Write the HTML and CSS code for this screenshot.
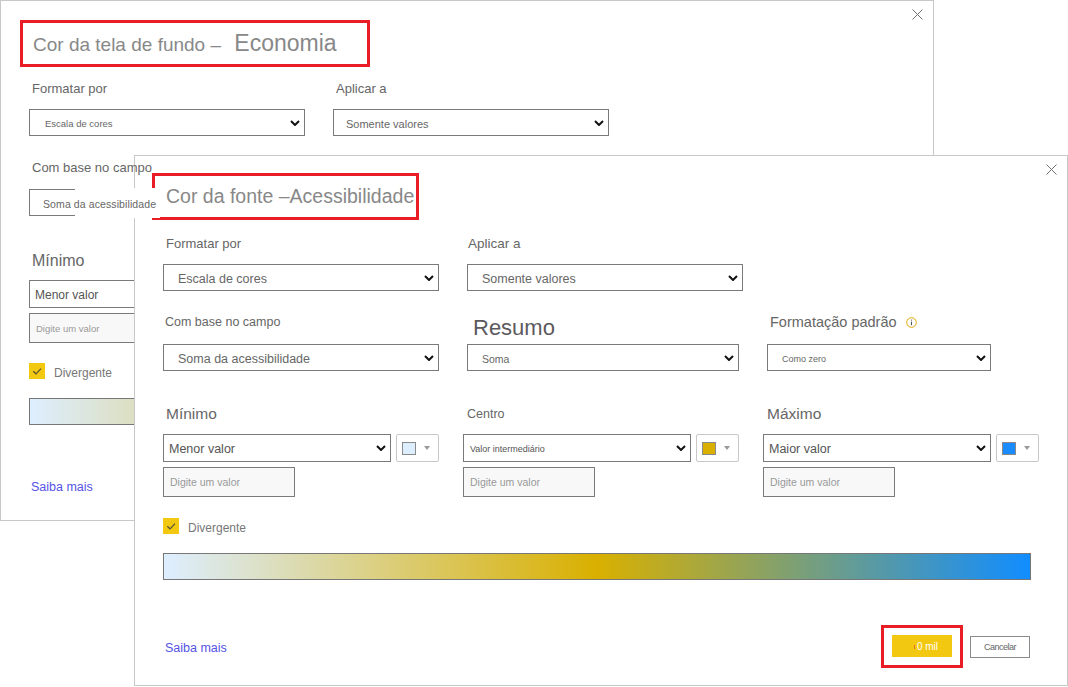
FILE: index.html
```html
<!DOCTYPE html>
<html lang="pt">
<head>
<meta charset="utf-8">
<title>Formatação condicional</title>
<link rel="stylesheet" href="styles.css">
</head>
<body>
<section class="dlg dlg-back">
  <button class="close" aria-label="Fechar"><svg width="11" height="11" viewBox="0 0 11 11"><path d="M0.5 0.5L10.5 10.5M10.5 0.5L0.5 10.5" stroke="#707070" stroke-width="1" fill="none"/></svg></button>
  <div class="head">
    <div class="title-box"><div class="tt"><span class="t1">Cor da tela de fundo –</span> <span class="t2">Economia</span></div></div>
  </div>
  <div class="row row-a">
    <div class="field c1">
      <div class="lbl">Formatar por</div>
      <div class="sel w276 pl15"><span class="st fs95">Escala de cores</span><svg class="chev" width="10" height="6" viewBox="0 0 10 6"><path d="M1 1l4 4 4-4" fill="none" stroke="#111" stroke-width="2"/></svg></div>
    </div>
    <div class="field c2">
      <div class="lbl">Aplicar a</div>
      <div class="sel w276 pl12"><span class="st fs11">Somente valores</span><svg class="chev" width="10" height="6" viewBox="0 0 10 6"><path d="M1 1l4 4 4-4" fill="none" stroke="#111" stroke-width="2"/></svg></div>
    </div>
  </div>
  <div class="row row-b">
    <div class="field c1">
      <div class="lbl over">Com base no campo</div>
      <div class="sel w276 pl13"><span class="bleed"></span><span class="st fs105 over">Soma da acessibilidade</span><svg class="chev" width="10" height="6" viewBox="0 0 10 6"><path d="M1 1l4 4 4-4" fill="none" stroke="#111" stroke-width="2"/></svg></div>
    </div>
  </div>
  <div class="row row-c">
    <div class="field cw">
      <div class="lbl big">Mínimo</div>
      <div class="pick">
        <div class="sel sel-c"><span class="st fs12 dark">Menor valor</span><svg class="chev" width="10" height="6" viewBox="0 0 10 6"><path d="M1 1l4 4 4-4" fill="none" stroke="#111" stroke-width="2"/></svg></div>
        <div class="cbtn"><span class="sw sw-light"></span><span class="caret"></span></div>
      </div>
      <div class="inp fs95">Digite um valor</div>
    </div>
  </div>
  <div class="chk-row">
    <svg class="chk" width="16" height="16" viewBox="0 0 16 16"><rect width="16" height="16" fill="#f2c811"/><path d="M4.3 8.2L7 10.8L12 5.6" fill="none" stroke="#5a5436" stroke-width="1.2"/></svg>
    <span>Divergente</span>
  </div>
  <div class="grad"></div>
  <div class="foot foot-back"><a class="more" href="#">Saiba mais</a></div>
</section>

<section class="dlg dlg-front">
  <button class="close" aria-label="Fechar"><svg width="11" height="11" viewBox="0 0 11 11"><path d="M0.5 0.5L10.5 10.5M10.5 0.5L0.5 10.5" stroke="#707070" stroke-width="1" fill="none"/></svg></button>
  <div class="head">
    <div class="title-box"><div class="tt">Cor da fonte –Acessibilidade</div></div>
  </div>
  <div class="row row-a">
    <div class="field c1">
      <div class="lbl">Formatar por</div>
      <div class="sel w276"><span class="st">Escala de cores</span><svg class="chev" width="10" height="6" viewBox="0 0 10 6"><path d="M1 1l4 4 4-4" fill="none" stroke="#111" stroke-width="2"/></svg></div>
    </div>
    <div class="field c2">
      <div class="lbl fs135 pl1">Aplicar a</div>
      <div class="sel w276"><span class="st">Somente valores</span><svg class="chev" width="10" height="6" viewBox="0 0 10 6"><path d="M1 1l4 4 4-4" fill="none" stroke="#111" stroke-width="2"/></svg></div>
    </div>
  </div>
  <div class="row row-b">
    <div class="field c1">
      <div class="lbl fs125 pl2">Com base no campo</div>
      <div class="sel w276"><span class="st">Soma da acessibilidade</span><svg class="chev" width="10" height="6" viewBox="0 0 10 6"><path d="M1 1l4 4 4-4" fill="none" stroke="#111" stroke-width="2"/></svg></div>
    </div>
    <div class="field c2">
      <div class="lbl resumo">Resumo</div>
      <div class="sel w272"><span class="st fs105">Soma</span><svg class="chev" width="10" height="6" viewBox="0 0 10 6"><path d="M1 1l4 4 4-4" fill="none" stroke="#111" stroke-width="2"/></svg></div>
    </div>
    <div class="field c3">
      <div class="lbl fs145">Formatação padrão<svg class="info" width="11" height="11" viewBox="0 0 11 11"><circle cx="5.5" cy="5.5" r="4.8" fill="none" stroke="#e0a400" stroke-width="1"/><path d="M5.5 4.6v3.6" stroke="#555" stroke-width="1.1"/><circle cx="5.5" cy="3.1" r="0.7" fill="#555"/></svg></div>
      <div class="sel w224"><span class="st fs9">Como zero</span><svg class="chev" width="10" height="6" viewBox="0 0 10 6"><path d="M1 1l4 4 4-4" fill="none" stroke="#111" stroke-width="2"/></svg></div>
    </div>
  </div>
  <div class="row row-c">
    <div class="field cw">
      <div class="lbl big">Mínimo</div>
      <div class="pick">
        <div class="sel sel-c"><span class="st dark">Menor valor</span><svg class="chev" width="10" height="6" viewBox="0 0 10 6"><path d="M1 1l4 4 4-4" fill="none" stroke="#111" stroke-width="2"/></svg></div>
        <div class="cbtn"><span class="sw sw-light"></span><span class="caret"></span></div>
      </div>
      <div class="inp">Digite um valor</div>
    </div>
    <div class="field cw">
      <div class="lbl fs125 pl4">Centro</div>
      <div class="pick">
        <div class="sel sel-c pl6"><span class="st fs9 dark">Valor intermediário</span><svg class="chev" width="10" height="6" viewBox="0 0 10 6"><path d="M1 1l4 4 4-4" fill="none" stroke="#111" stroke-width="2"/></svg></div>
        <div class="cbtn"><span class="sw sw-gold"></span><span class="caret"></span></div>
      </div>
      <div class="inp">Digite um valor</div>
    </div>
    <div class="field cw">
      <div class="lbl big pl4">Máximo</div>
      <div class="pick">
        <div class="sel sel-c"><span class="st dark">Maior valor</span><svg class="chev" width="10" height="6" viewBox="0 0 10 6"><path d="M1 1l4 4 4-4" fill="none" stroke="#111" stroke-width="2"/></svg></div>
        <div class="cbtn"><span class="sw sw-blue"></span><span class="caret"></span></div>
      </div>
      <div class="inp">Digite um valor</div>
    </div>
  </div>
  <div class="chk-row">
    <svg class="chk" width="16" height="16" viewBox="0 0 16 16"><rect width="16" height="16" fill="#f2c811"/><path d="M4.3 8.2L7 10.8L12 5.6" fill="none" stroke="#5a5436" stroke-width="1.2"/></svg>
    <span>Divergente</span>
  </div>
  <div class="grad"></div>
  <div class="foot">
    <a class="more" href="#">Saiba mais</a>
    <div class="actions">
      <div class="okwrap"><button class="ok"><span class="mark"></span>0 mil</button></div>
      <button class="cancel">Cancelar</button>
    </div>
  </div>
</section>
</body>
</html>
```

FILE: styles.css
```css
* { box-sizing: border-box; margin: 0; padding: 0; }
html, body { width: 1068px; height: 687px; }
body {
  position: relative;
  overflow: hidden;
  background: #fff;
  font-family: "Liberation Sans", Arial, sans-serif;
  color: #666;
}

.dlg {
  position: absolute;
  background: #fff;
  border: 1px solid #c8c8c8;
  padding-left: 28px;
}
.dlg-back { left: 0; top: 0; width: 934px; height: 521px; }
.dlg-front { left: 134px; top: 155px; width: 934px; height: 531px; z-index: 1; }

.close {
  position: absolute;
  left: 911px;
  top: 8px;
  width: 11px;
  height: 11px;
  border: 0;
  background: none;
}
.close svg { display: block; }

.head { height: 78px; padding-top: 17px; }
.dlg-back .head { padding-top: 19px; }

.title-box {
  display: flex;
  align-items: center;
  height: 47px;
  border: 3px solid #e81d25;
  color: #888;
  white-space: nowrap;
}
.dlg-front .title-box { width: 267px; margin-left: -11px; padding-left: 11px; }
.dlg-back .title-box { width: 350px; margin-left: -9px; padding-left: 10px; }
.dlg-front .tt { font-size: 19.5px; }
.dlg-back .tt { font-size: 19px; }
.t2 { font-size: 23px; margin-left: 8px; }

.row { display: flex; }
.field { display: flex; flex-direction: column; flex: none; }
.c1 { width: 304px; }
.c2 { width: 300px; }
.c3 { width: 260px; }
.cw { width: 300px; }

.row-a .field { gap: 12px; }
.row-b { margin-top: 21px; }
.row-b .field { gap: 14px; }
.row-c { margin-top: 33px; }
.dlg-back .row-c { margin-top: 34px; }

.lbl {
  height: 18px;
  line-height: 20px;
  font-size: 13px;
  color: #666;
  padding-left: 3px;
  white-space: nowrap;
}
.dlg-back .row-b .lbl { line-height: 22px; }
.big { font-size: 15.5px; }
.dlg-back .big { font-size: 16px; line-height: 22px; }
.resumo {
  font-size: 22px;
  line-height: 18px;
  color: #5c595e;
  padding-left: 6px;
  margin-top: 7px;
  margin-bottom: -7px;
}
.info { margin-left: 9px; vertical-align: -1px; }

.sel {
  position: relative;
  display: flex;
  align-items: center;
  height: 27px;
  border: 1px solid #7a7a7a;
  padding: 0 4px 0 14px;
  background: #fff;
  white-space: nowrap;
}
.sel.pl15 { padding-left: 15px; }
.sel.pl12 { padding-left: 12px; }
.sel.pl13 { padding-left: 13px; }
.sel.pl6 { padding-left: 6px; }
.w276 { width: 276px; }
.w272 { width: 272px; }
.w224 { width: 224px; }
.st { font-size: 12.5px; color: #666; padding-top: 2px; }
.st.dark { color: #555; }
.chev { margin-left: auto; flex: none; }

.fs9 { font-size: 9px; }
.fs95 { font-size: 9.5px; }
.fs105 { font-size: 10.5px; }
.fs11 { font-size: 11px; }
.fs12 { font-size: 12px; }
.fs125 { font-size: 12.5px; }
.fs135 { font-size: 13.5px; }
.fs145 { font-size: 14.5px; }
.pl1 { padding-left: 1px; }
.pl2 { padding-left: 2px; }
.pl4 { padding-left: 4px; }

.bleed {
  position: absolute;
  left: 45px;
  top: -2px;
  width: 85px;
  height: 30px;
  background: #fff;
  z-index: 2;
}
.over { position: relative; z-index: 3; }
.st.fs105.over { letter-spacing: 0.1px; }

.pick { display: flex; gap: 5px; margin-top: 12px; }
.sel-c { width: 228px; height: 28px; padding-left: 5px; }
.cbtn {
  display: flex;
  align-items: center;
  width: 43px;
  height: 28px;
  border: 1px solid #c8c8c8;
  border-radius: 2px;
  padding-left: 5px;
}
.sw { width: 14px; height: 13px; border: 1px solid #8a8a8a; }
.sw-light { background: #ddeeff; }
.sw-gold { background: #d9b000; }
.sw-blue { background: #1a8cff; }
.caret {
  margin-left: 8px;
  width: 0;
  height: 0;
  border-left: 3.5px solid transparent;
  border-right: 3.5px solid transparent;
  border-top: 4px solid #9a9a9a;
}

.inp {
  display: flex;
  align-items: center;
  margin-top: 5px;
  width: 132px;
  height: 30px;
  border: 1px solid #7a7a7a;
  background: #f8f8f8;
  color: #999;
  font-size: 10.5px;
  padding-left: 6px;
}
.inp.fs95 { font-size: 9.5px; }

.chk-row {
  display: flex;
  align-items: center;
  gap: 9px;
  margin-top: 21px;
  height: 16px;
  font-size: 12px;
  line-height: 18px;
  color: #777;
}
.chk-row span { padding-top: 3px; }
.dlg-back .chk-row { margin-top: 20px; }
.chk { display: block; flex: none; }

.grad {
  margin-top: 19px;
  width: 868px;
  height: 27px;
  border: 1px solid #777;
  background: linear-gradient(to right, #ddeeff, #d9b000, #118dff);
}

.foot {
  display: flex;
  align-items: center;
  justify-content: space-between;
  margin-top: 45px;
  height: 43px;
  padding-right: 37px;
}
.foot-back { margin-top: 39px; }
.more {
  color: #5454e6;
  text-decoration: none;
  font-size: 12.5px;
  margin-left: 2px;
  padding-top: 3px;
}
.actions { display: flex; align-items: center; gap: 7px; }
.okwrap { border: 3px solid #e81d25; padding: 7px 8px 8px 8px; }
.ok {
  display: flex;
  align-items: center;
  justify-content: center;
  width: 60px;
  height: 22px;
  border: 0;
  background: #f2c811;
  color: #fff;
  font-family: inherit;
  font-size: 10px;
  padding-left: 8px;
}
.mark {
  display: inline-block;
  width: 1px;
  height: 4px;
  background: #e0701c;
  margin-right: 2px;
  margin-top: 2px;
}
.cancel {
  width: 60px;
  height: 22px;
  border: 1px solid #8a8a8a;
  background: #fff;
  color: #666;
  font-family: inherit;
  font-size: 9px;
  letter-spacing: -0.5px;
}
```
